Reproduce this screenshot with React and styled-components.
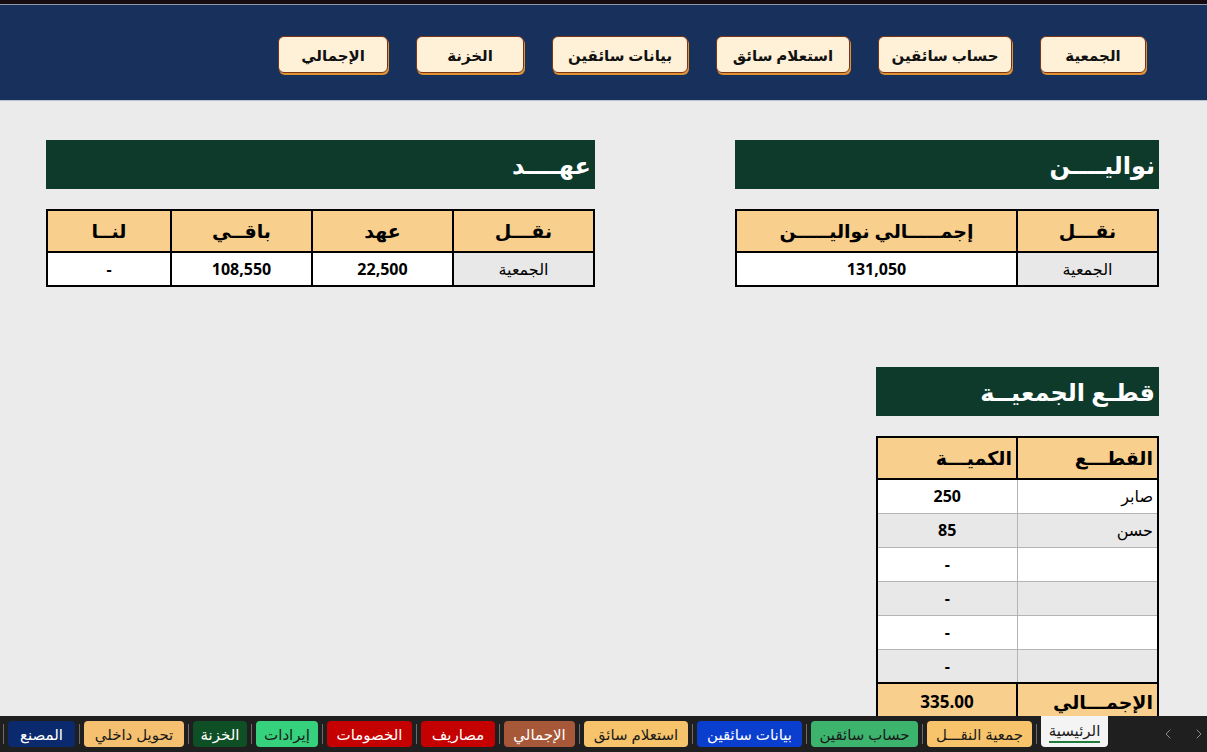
import React from 'react';
import styled, { createGlobalStyle } from 'styled-components';
import { ChevronLeft, ChevronRight } from 'lucide-react';

const GlobalStyle = createGlobalStyle`
  html, body {
    margin: 0;
    padding: 0;
  }
  body {
    background: #ebebeb;
    font-family: "Open Sans", "DejaVu Sans", sans-serif;
  }
  * {
    box-sizing: border-box;
  }
`;

const Page = styled.div`
  width: 1207px;
  height: 752px;
  display: flex;
  flex-direction: column;
  overflow: hidden;
  background: #ebebeb;
`;

const TopStrip = styled.div`
  height: 5px;
  flex-shrink: 0;
  background: #150b10;
  border-bottom: 1px solid #8e9aa8;
`;

const NavBand = styled.div`
  height: 96px;
  flex-shrink: 0;
  direction: rtl;
  display: flex;
  align-items: flex-start;
  gap: 28px;
  padding: 31px 61px 0 0;
  background: #17305c;
  border-bottom: 1px solid #b9c1cc;
`;

const NavButton = styled.button`
  width: ${(p) => p.$w}px;
  height: 37px;
  padding: 0;
  border: 1.5px solid #7d3315;
  border-radius: 6px;
  background: #fff1d8;
  box-shadow: 1px 2px 0 #df9232;
  color: #111;
  font-family: inherit;
  font-size: 15px;
  font-weight: bold;
  cursor: pointer;
`;

const Sheet = styled.div`
  flex: 1;
  min-height: 0;
  overflow: hidden;
  direction: rtl;
  display: flex;
  flex-direction: column;
  padding: 39px 48px 0 46px;
`;

const TopRow = styled.div`
  display: flex;
  justify-content: space-between;
  align-items: flex-start;
`;

const Panel = styled.section`
  width: ${(p) => p.$w}px;
  display: flex;
  flex-direction: column;
  gap: 20px;
  margin-top: ${(p) => p.$top || 0}px;
`;

const PanelTitle = styled.div`
  height: 49px;
  line-height: 49px;
  padding-right: 4px;
  background: #0d3a2b;
  color: #fff;
  font-size: 24px;
  font-weight: bold;
  text-align: right;
  white-space: nowrap;
`;

const Table = styled.table`
  width: 100%;
  table-layout: fixed;
  border-collapse: collapse;
  border: 2px solid #000;
  background: #fff;
`;

const Th = styled.th`
  height: 42px;
  padding: 0 4px;
  background: #f8cf8d;
  border: 2px solid #000;
  color: #000;
  font-size: 19px;
  font-weight: bold;
  text-align: ${(p) => p.$align || 'center'};
  white-space: nowrap;
`;

const Td = styled.td`
  height: ${(p) => p.$h || 34}px;
  padding: 0 4px;
  background: ${(p) => (p.$shade ? '#e8e8e8' : '#fff')};
  border: ${(p) => (p.$soft ? '1px solid #b4b4b4' : '2px solid #000')};
  color: #000;
  font-size: 16px;
  font-weight: ${(p) => (p.$bold ? 'bold' : 'normal')};
  text-align: ${(p) => p.$align || 'center'};
  white-space: nowrap;
`;

const TotalCell = styled.td`
  height: 37px;
  padding: 0 4px;
  background: #f8cf8d;
  border: 2px solid #000;
  font-size: ${(p) => (p.$label ? 19 : 17)}px;
  font-weight: bold;
  text-align: ${(p) => p.$align || 'center'};
  white-space: nowrap;
`;

const TabBar = styled.div`
  height: 36px;
  flex-shrink: 0;
  direction: rtl;
  display: flex;
  align-items: center;
  gap: 4px;
  background: #1f1f1f;
`;

const Arrows = styled.div`
  width: 95px;
  height: 100%;
  direction: ltr;
  display: flex;
  align-items: center;
  gap: 15px;
  padding-left: 48px;
  color: #8d8d8d;
`;

const Tab = styled.div`
  width: ${(p) => p.$w}px;
  height: 26px;
  flex-shrink: 0;
  border-radius: 4px;
  background: ${(p) => p.$bg};
  color: ${(p) => (p.$light ? '#fff' : '#1a1a1a')};
  font-size: 15px;
  line-height: 26px;
  text-align: center;
  white-space: nowrap;
  overflow: hidden;
`;

const ActiveTab = styled.div`
  width: ${(p) => p.$w}px;
  height: 31px;
  align-self: flex-start;
  flex-shrink: 0;
  display: flex;
  align-items: center;
  justify-content: center;
  border-radius: 0 0 4px 4px;
  background: #f4f4f4;
  color: #1a1a1a;
  font-size: 15px;
  white-space: nowrap;

  span {
    padding-bottom: 1px;
    border-bottom: 2px solid #1e7b3a;
  }
`;

const Divider = styled.span`
  width: 1px;
  height: 20px;
  flex-shrink: 0;
  background: #6b6b6b;
`;

const navItems = [
  { label: 'الجمعية', w: 106 },
  { label: 'حساب سائقين', w: 134 },
  { label: 'استعلام سائق', w: 134 },
  { label: 'بيانات سائقين', w: 136 },
  { label: 'الخزنة', w: 108 },
  { label: 'الإجمالي', w: 110 },
];

const parts = [
  { name: 'صابر', qty: '250' },
  { name: 'حسن', qty: '85' },
  { name: '', qty: '-' },
  { name: '', qty: '-' },
  { name: '', qty: '-' },
  { name: '', qty: '-' },
];

const tabs = [
  { label: 'جمعية النقـــل', w: 105, bg: '#f7c46c' },
  { label: 'حساب سائقين', w: 107, bg: '#3cb46e' },
  { label: 'بيانات سائقين', w: 105, bg: '#0a3ecf', light: true },
  { label: 'استعلام سائق', w: 104, bg: '#f7c46c' },
  { label: 'الإجمالي', w: 71, bg: '#a65838', light: true },
  { label: 'مصاريف', w: 74, bg: '#c40000', light: true },
  { label: 'الخصومات', w: 85, bg: '#c40000', light: true },
  { label: 'إيرادات', w: 62, bg: '#36d17c' },
  { label: 'الخزنة', w: 54, bg: '#0f4f25', light: true },
  { label: 'تحويل داخلي', w: 100, bg: '#f5c070' },
  { label: 'المصنع', w: 67, bg: '#0b2a6e', light: true },
];

const App = () => {
  return (
    <Page>
      <GlobalStyle />
      <TopStrip />
      <NavBand>
        {navItems.map((item) => (
          <NavButton key={item.label} $w={item.w}>{item.label}</NavButton>
        ))}
      </NavBand>

      <Sheet>
        <TopRow>
          <Panel $w={424}>
            <PanelTitle>نواليــــن</PanelTitle>
            <Table>
              <colgroup>
                <col style={{ width: 141 }} />
                <col />
              </colgroup>
              <thead>
                <tr>
                  <Th>نقـــل</Th>
                  <Th>إجمـــــالي نواليـــــن</Th>
                </tr>
              </thead>
              <tbody>
                <tr>
                  <Td $shade>الجمعية</Td>
                  <Td $bold>131,050</Td>
                </tr>
              </tbody>
            </Table>
          </Panel>

          <Panel $w={549}>
            <PanelTitle>عهــــد</PanelTitle>
            <Table>
              <colgroup>
                <col style={{ width: 141 }} />
                <col style={{ width: 141 }} />
                <col style={{ width: 141 }} />
                <col />
              </colgroup>
              <thead>
                <tr>
                  <Th>نقـــل</Th>
                  <Th>عهد</Th>
                  <Th>باقــي</Th>
                  <Th>لنــا</Th>
                </tr>
              </thead>
              <tbody>
                <tr>
                  <Td $shade>الجمعية</Td>
                  <Td $bold>22,500</Td>
                  <Td $bold>108,550</Td>
                  <Td $bold>-</Td>
                </tr>
              </tbody>
            </Table>
          </Panel>
        </TopRow>

        <Panel $w={283} $top={80}>
          <PanelTitle>قطـع الجمعيــة</PanelTitle>
          <Table>
            <colgroup>
              <col style={{ width: 141 }} />
              <col />
            </colgroup>
            <thead>
              <tr>
                <Th $align="right">القطـــع</Th>
                <Th $align="right">الكميـــة</Th>
              </tr>
            </thead>
            <tbody>
              {parts.map((row, i) => (
                <tr key={i}>
                  <Td $soft $shade={i % 2 === 1} $align="right">{row.name}</Td>
                  <Td $soft $shade={i % 2 === 1} $bold>{row.qty}</Td>
                </tr>
              ))}
              <tr>
                <TotalCell $label $align="right">الإجمـــالي</TotalCell>
                <TotalCell>335.00</TotalCell>
              </tr>
            </tbody>
          </Table>
        </Panel>
      </Sheet>

      <TabBar>
        <Arrows>
          <ChevronLeft size={20} strokeWidth={1.5} />
          <ChevronRight size={20} strokeWidth={1.5} />
        </Arrows>
        <ActiveTab $w={67}><span>الرئيسية</span></ActiveTab>
        {tabs.map((tab) => (
          <React.Fragment key={tab.label}>
            <Divider />
            <Tab $w={tab.w} $bg={tab.bg} $light={tab.light}>{tab.label}</Tab>
          </React.Fragment>
        ))}
        <Divider />
      </TabBar>
    </Page>
  );
};

export default App;
